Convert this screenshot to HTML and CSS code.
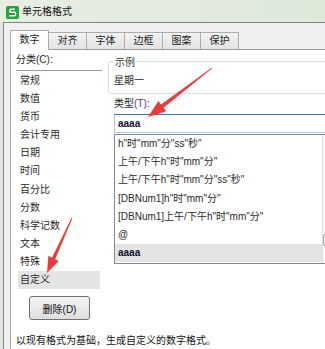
FILE: index.html
```html
<!DOCTYPE html>
<html lang="zh-CN">
<head>
    <meta charset="UTF-8">
    <meta name="viewport" content="width=device-width, initial-scale=1.0">
    <title>单元格格式</title>
    <link rel="stylesheet" href="styles.css">
</head>
<body>
    <div class="titlebar">
        <svg class="app-icon" width="13" height="13" viewBox="0 0 13 13">
            <rect x="0" y="0" width="13" height="13" rx="2" fill="#22a33f"/>
            <path d="M4 3.2 H8.8 M4 3.2 V6.3 H8.6 Q9.6 6.3 9.6 7.6 V8.8 Q9.6 9.8 8.6 9.8 H3.2" fill="none" stroke="#fff" stroke-width="1.4"/>
        </svg>
        <span class="title">单元格格式</span>
    </div>

    <div class="window">
        <div class="tabs">
            <div class="tab active">数字</div>
            <div class="tab">对齐</div>
            <div class="tab">字体</div>
            <div class="tab">边框</div>
            <div class="tab">图案</div>
            <div class="tab">保护</div>
        </div>

        <div class="panel">
            <div class="panel-body">
                <div class="cat-col">
                    <div class="cat-label">分类(C):</div>
                    <ul class="cat-list">
                        <li>常规</li>
                        <li>数值</li>
                        <li>货币</li>
                        <li>会计专用</li>
                        <li>日期</li>
                        <li>时间</li>
                        <li>百分比</li>
                        <li>分数</li>
                        <li>科学记数</li>
                        <li>文本</li>
                        <li>特殊</li>
                        <li class="selected">自定义</li>
                    </ul>
                    <button class="del-btn">删除(D)</button>
                </div>

                <div class="fmt-col">
                    <div class="sample">
                        <div class="sample-legend">示例</div>
                        <div class="sample-text">星期一</div>
                    </div>
                    <div class="type-label">类型<span class="hotkey">(T)</span>:</div>
                    <div class="type-input">aaaa</div>
                    <div class="fmt-list">
                        <ul class="fmt-rows">
                            <li>h"时"mm"分"ss"秒"</li>
                            <li>上午/下午h"时"mm"分"</li>
                            <li>上午/下午h"时"mm"分"ss"秒"</li>
                            <li>[DBNum1]h"时"mm"分"</li>
                            <li>[DBNum1]上午/下午h"时"mm"分"</li>
                            <li>@</li>
                            <li class="selected bold">aaaa</li>
                        </ul>
                        <div class="scrollbar">
                            <div class="thumb"></div>
                        </div>
                    </div>
                </div>
            </div>
            <p class="hint">以现有格式为基础，生成自定义的数字格式。</p>
        </div>
    </div>

    <!-- annotation arrows drawn over the dialog -->
    <svg class="arrows" width="325" height="349" viewBox="0 0 325 349">
        <polygon points="212.3,68.3 163.5,107.7 166.2,111.2 148,117 158.4,101 161.1,104.5 211.7,67.7" fill="#ee3a36"/>
        <polygon points="72.4,218.2 55.2,259.2 58.8,261 47,273 48.4,255.8 52,257.7 71.6,217.8" fill="#ee3a36"/>
    </svg>
</body>
</html>
```

FILE: styles.css
```css
* {
    box-sizing: border-box;
}
body {
    margin: 0;
    width: 325px;
    height: 349px;
    overflow: hidden;
    position: relative;
    background-color: #e2eadf;
    font-family: "Liberation Sans", "Noto Sans CJK SC", sans-serif;
    font-size: 10px;
    color: #1e1e1e;
}
.titlebar {
    height: 22px;
    display: flex;
    align-items: center;
    gap: 3px;
    padding: 2px 0 0 6px;
    background: linear-gradient(to right, #e7eee4, #dde8d9);
}
.app-icon {
    display: block;
}
.title {
    font-size: 10px;
    line-height: 14px;
    color: #111;
}
.window {
    margin-left: 3px;
    width: 322px;
    height: 327px;
    overflow: hidden;
    border-top: 1px solid #7d877b;
    border-left: 1px solid #7d877b;
    background-color: #f0f0f0;
}
.tabs {
    display: flex;
    align-items: flex-end;
    padding: 6px 0 0 6px;
    height: 26px;
}
.tab {
    width: 39px;
    height: 17px;
    margin-left: -1px;
    border: 1px solid #acacac;
    border-bottom: none;
    background: linear-gradient(#f2f2f2, #e3e3e3);
    text-align: center;
    line-height: 15px;
}
.tab.active {
    margin-left: 0;
    height: 20px;
    margin-bottom: -1px;
    background: #fff;
    line-height: 18px;
    position: relative;
    z-index: 1;
}
.panel {
    margin-left: 6px;
    height: 301px;
    border-top: 1px solid #9a9a9a;
    border-left: 1px solid #a8a8a8;
    background-color: #fff;
}
.panel-body {
    display: grid;
    grid-template-columns: 93px 1fr;
    column-gap: 4px;
}
.cat-label {
    margin: 0 2px 0 5px;
    padding: 3px 0;
    line-height: 14px;
    border-bottom: 1px solid #9a9a9a;
}
ul {
    list-style: none;
    margin: 0;
    padding: 0;
}
.cat-list {
    margin: 1px 4px 0 7px;
}
.cat-list li {
    height: 18.1px;
    line-height: 18.1px;
    padding-left: 2px;
    color: #2a2a2a;
}
.selected {
    background-color: #e4e4e4;
}
.del-btn {
    display: block;
    margin: 7px 0 0 18px;
    width: 61px;
    height: 24px;
    padding: 0;
    border: 1px solid #707070;
    border-radius: 3px;
    background: linear-gradient(#f4f4f4, #dedede);
    font-family: inherit;
    font-size: 10px;
    color: #111;
}
.fmt-col {
    min-width: 0;
}
.sample {
    margin: 11px -20px 0 0;
    height: 33px;
    border: 1px solid #d3dde3;
    border-radius: 3px;
}
.sample-legend {
    width: fit-content;
    margin: -6px 0 0 5px;
    padding: 0 1px;
    line-height: 14px;
    background: #fff;
    color: #333;
}
.sample-text {
    margin: 4px 0 0 5px;
    line-height: 14px;
}
.type-label {
    margin: 3px 0 0 6px;
    line-height: 14px;
}
.hotkey {
    color: #5b2d7c;
}
.type-input {
    margin: 3px -20px 0 6px;
    height: 19px;
    padding-left: 3px;
    border: 1px solid #a9c8e2;
    border-top-color: #3c78aa;
    line-height: 17px;
    font-weight: bold;
    color: #101030;
}
.fmt-list {
    display: flex;
    margin: 1px 0 0 6px;
    width: 226px;
    height: 130px;
    border: 1px solid #828790;
}
.fmt-rows {
    flex: 1;
}
.fmt-rows li {
    height: 18.2px;
    line-height: 18.2px;
    padding-left: 3px;
    color: #2a2a2a;
    white-space: nowrap;
}
.fmt-rows li.bold {
    font-weight: bold;
    color: #101030;
}
.scrollbar {
    width: 17px;
    display: flex;
    flex-direction: column;
    background: #fafafa;
    border-left: 1px solid #e0e0e0;
}
.thumb {
    margin-top: auto;
    margin-bottom: 17px;
    height: 12px;
    border: 1px solid #a8a8a8;
    border-radius: 2px;
    background: #f0f0f0;
}
.hint {
    margin: 14px 0 0 5px;
    line-height: 14px;
    color: #111;
    white-space: nowrap;
}
.arrows {
    position: absolute;
    left: 0;
    top: 0;
    pointer-events: none;
}
```
